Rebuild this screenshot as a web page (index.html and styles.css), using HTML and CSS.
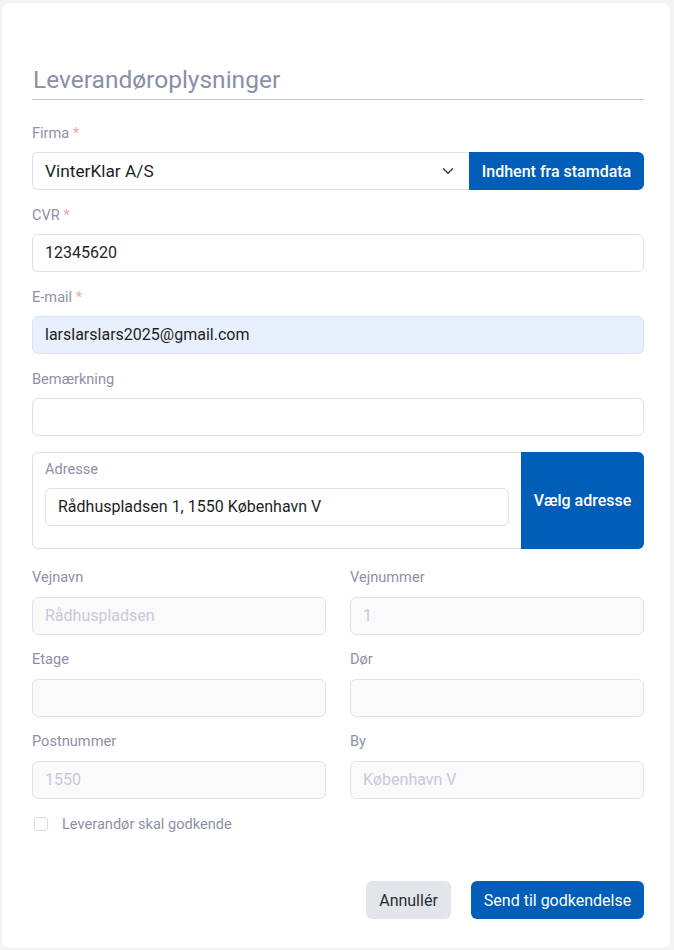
FILE: index.html
```html
<!DOCTYPE html>
<html lang="da">
<head>
<meta charset="utf-8">
<title>Leverandøroplysninger</title>
<link rel="stylesheet" href="styles.css">
</head>
<body>
<main class="card">
  <h2 class="section-title">Leverandøroplysninger</h2>

  <div class="field">
    <label class="label">Firma <span class="req">*</span></label>
    <div class="input-group">
      <div class="select">
        <span>VinterKlar A/S</span>
        <svg class="chevron" width="12" height="8" viewBox="0 0 12 8"><path d="M1.5 1.8 6 6.2l4.5-4.4" fill="none" stroke="#3a3f4a" stroke-width="1.5" stroke-linecap="round" stroke-linejoin="round"/></svg>
      </div>
      <button class="btn btn-primary btn-append">Indhent fra stamdata</button>
    </div>
  </div>

  <div class="field">
    <label class="label">CVR <span class="req">*</span></label>
    <div class="input">12345620</div>
  </div>

  <div class="field">
    <label class="label">E-mail <span class="req">*</span></label>
    <div class="input input-autofill">larslarslars2025@gmail.com</div>
  </div>

  <div class="field">
    <label class="label">Bemærkning</label>
    <div class="input"></div>
  </div>

  <div class="address-box">
    <div class="address-main">
      <label class="label">Adresse</label>
      <div class="input">Rådhuspladsen 1, 1550 København V</div>
    </div>
    <button class="btn btn-primary btn-address">Vælg adresse</button>
  </div>

  <div class="grid">
    <div class="field">
      <label class="label">Vejnavn</label>
      <div class="input input-disabled">Rådhuspladsen</div>
    </div>
    <div class="field">
      <label class="label">Vejnummer</label>
      <div class="input input-disabled">1</div>
    </div>
    <div class="field">
      <label class="label">Etage</label>
      <div class="input input-disabled"></div>
    </div>
    <div class="field">
      <label class="label">Dør</label>
      <div class="input input-disabled"></div>
    </div>
    <div class="field">
      <label class="label">Postnummer</label>
      <div class="input input-disabled">1550</div>
    </div>
    <div class="field">
      <label class="label">By</label>
      <div class="input input-disabled">København V</div>
    </div>
  </div>

  <div class="check-row">
    <span class="checkbox"></span>
    <span class="check-label">Leverandør skal godkende</span>
  </div>

  <div class="actions">
    <button class="btn btn-secondary">Annullér</button>
    <button class="btn btn-primary btn-send">Send til godkendelse</button>
  </div>
</main>
</body>
</html>
```

FILE: styles.css
```css
* { box-sizing: border-box; }

body {
  margin: 0;
  background: #f4f4f5;
  font-family: Roboto, "Liberation Sans", sans-serif;
  color: #1d1f24;
}

.card {
  margin: 3px 4px 2px 2px;
  background: #ffffff;
  border-radius: 8px;
  padding: 63px 26px 29px 30px;
}

.section-title {
  margin: 0 0 23px;
  padding: 0 0 5px 1px;
  font-size: 24.5px;
  line-height: 28px;
  font-weight: 400;
  color: #8a8fa8;
  border-bottom: 1px solid #c8c8cc;
}

.field {
  margin-bottom: 15px;
}

.label {
  display: block;
  font-size: 14.6px;
  line-height: 20px;
  color: #8d91a6;
  margin-bottom: 9px;
}

.req { color: #f3a3a8; }

.input,
.select {
  height: 38px;
  border: 1px solid #dfe1e6;
  border-radius: 6px;
  padding: 0 12px;
  font-size: 16px;
  line-height: 36px;
  color: #1d1f24;
  background: #fff;
  white-space: nowrap;
}

.input-autofill {
  background: #e8f0fe;
  border-color: #dde3ee;
}

.input-disabled {
  background: #fafafb;
  border-color: #e2e3e8;
  color: #c7c9dd;
}

.input-group {
  display: flex;
}

.select {
  flex: 1;
  display: flex;
  align-items: center;
  justify-content: space-between;
  border-radius: 6px 0 0 6px;
  border-right: none;
  padding-right: 15px;
  font-size: 17.3px;
}

.chevron { display: block; }

.btn {
  border: none;
  font-family: inherit;
  font-size: 16px;
  font-weight: 500;
  border-radius: 6px;
  cursor: pointer;
  padding: 0;
  height: 38px;
  white-space: nowrap;
}

.btn-primary {
  background: #005eb8;
  color: #fff;
}

.btn-append {
  width: 175px;
  border-radius: 0 6px 6px 0;
}

.address-box {
  display: flex;
  border: 1px solid #dfe1e6;
  border-radius: 6px;
  margin-top: 16px;
  margin-bottom: 18px;
}

.address-main {
  flex: 1;
  padding: 6px 12px 22px 12px;
}

.address-main .label { margin-bottom: 9px; }

.btn-address {
  width: 123px;
  height: auto;
  margin: -1px -1px -1px 0;
  border-radius: 0 6px 6px 0;
}

.grid {
  display: grid;
  grid-template-columns: 1fr 1fr;
  column-gap: 24px;
}

.grid .label { margin-bottom: 10px; }
.grid .field { margin-bottom: 14px; }

.check-row {
  display: flex;
  align-items: center;
  height: 20px;
  margin-top: 1px;
}

.checkbox {
  width: 14px;
  height: 14px;
  border: 1px solid #dcdde3;
  border-radius: 3px;
  margin-left: 2px;
  background: #fff;
}

.check-label {
  margin-left: 14px;
  font-size: 14.6px;
  color: #8d91a6;
}

.actions {
  display: flex;
  justify-content: flex-end;
  gap: 20px;
  margin-top: 47px;
}

.btn-secondary {
  background: #e2e5ea;
  color: #2a2c33;
  font-weight: 400;
  width: 85px;
}

.btn-send {
  width: 173px;
  font-weight: 400;
}
```
